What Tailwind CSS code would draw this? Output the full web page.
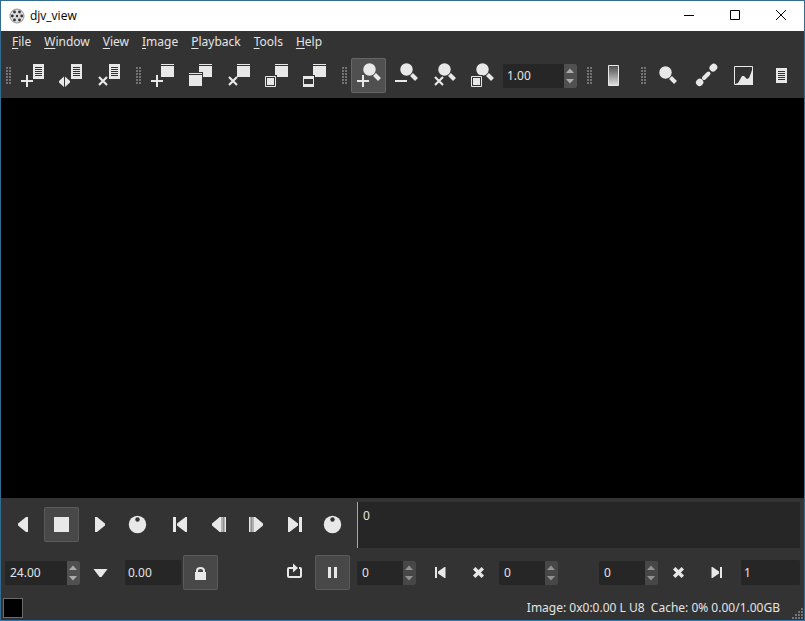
<!DOCTYPE html>
<html lang="en">
<head>
<meta charset="utf-8">
<meta name="viewport" content="width=device-width, initial-scale=1">
<title>djv_view</title>
<script src="https://cdn.jsdelivr.net/npm/@tailwindcss/browser@4"></script>
</head>
<body class="h-screen overflow-hidden bg-[#333333] font-['Noto_Sans',sans-serif] text-xs text-[#e4e4e4]">

<svg class="absolute size-0" aria-hidden="true">
  <defs>
    <linearGradient id="ramp" x1="0" y1="0" x2="0" y2="1"><stop offset="0" stop-color="#4c4c4c"/><stop offset="1" stop-color="#e0e0e0"/></linearGradient>
    <pattern id="dots" width="3" height="3" patternUnits="userSpaceOnUse"><rect width="2" height="2" fill="#737373"/></pattern>
    <symbol id="page" viewBox="0 0 11 15"><path fill="#e8e8e8" d="M0 0h11v15H0z"/><path stroke="#333" d="M2 3.500h7M2 5.500h7M2 7.500h7M2 9.500h7M2 11.500h7"/></symbol>
    <symbol id="win" viewBox="0 0 13 13"><path fill="#e8e8e8" d="M0 0h13v1H0zM0 2h13v11H0z"/></symbol>
    <symbol id="plus" viewBox="0 0 12 12"><path fill="#e8e8e8" d="M5 0h2v5h5v2H7v5H5V7H0V5h5z"/></symbol>
    <symbol id="cross" viewBox="0 0 10 10"><path stroke="#e8e8e8" stroke-width="2.2" d="M1 1l8 8M9 1l-8 8"/></symbol>
    <symbol id="box" viewBox="0 0 13 13"><path fill="#333" d="M0 0h13v13H0z"/><path fill="none" stroke="#e8e8e8" d="M1.500 1.500h10v10h-10z"/><path fill="#e8e8e8" d="M3 3h7v7H3z"/></symbol>
    <symbol id="lens" viewBox="0 0 20 20"><circle cx="6.500" cy="6.500" r="6.200" fill="#e8e8e8"/><path stroke="#e8e8e8" stroke-width="4" d="M11.500 11.500l5 5"/></symbol>
    <symbol id="shuttle" viewBox="0 0 35 35"><circle cx="17.500" cy="17.500" r="8.700" fill="#e8e8e8"/><circle cx="17.500" cy="12.500" r="2.200" fill="#333"/></symbol>
    <symbol id="skip" viewBox="0 0 35 35"><path fill="#e8e8e8" d="M10 10h3v15h-3zM24 10v15h-1.500L14 18.500v-2L22.500 10z"/></symbol>
    <symbol id="step" viewBox="0 0 35 35"><path fill="#e8e8e8" d="M20.700 10v15h-2L11 18.500v-2L18.700 10zM21.300 10h1.200v15h-1.200zM23.300 10h1.700v15h-1.700z"/></symbol>
    <symbol id="skipsm" viewBox="0 0 35 35"><path fill="#e8e8e8" d="M12 12h2v11h-2zM22.500 12v11h-1L15 18.500v-2L21.500 12z"/></symbol>
    <symbol id="clear" viewBox="0 0 35 35"><path stroke="#e8e8e8" stroke-width="3.400" d="M13.200 13.200l8.600 8.600M21.800 13.200l-8.600 8.600"/></symbol>
    <symbol id="up" viewBox="0 0 12 12"><path fill="#adadad" d="M2 9l4-4.500L10 9z"/></symbol>
    <symbol id="down" viewBox="0 0 12 12"><path fill="#adadad" d="M2 3l4 4.500L10 3z"/></symbol>
  </defs>
</svg>

<div class="flex h-full flex-col border border-[#346b90] border-b-[#2a7ab5]">
  <header class="flex h-[30px] shrink-0 items-center bg-white text-black">
    <svg class="ml-2 size-4" viewBox="0 0 16 16" aria-hidden="true">
      <circle cx="8" cy="8" r="7" fill="#ddd" stroke="#999"/>
      <g fill="#333"><circle cx="8" cy="8" r="1.200"/><circle cx="5.500" cy="4" r="1.400"/><circle cx="10.500" cy="4" r="1.400"/><circle cx="3.300" cy="8" r="1.400"/><circle cx="12.700" cy="8" r="1.400"/><circle cx="5.500" cy="12" r="1.400"/><circle cx="10.500" cy="12" r="1.400"/></g>
    </svg>
    <h1 class="ml-[5px] flex-1 font-['Open_Sans',sans-serif] text-xs">djv_view</h1>
    <button aria-label="Minimize" class="grid h-full w-[46px] place-items-center"><svg class="size-3" viewBox="0 0 12 12"><path stroke="#000" d="M1 5.500h10"/></svg></button>
    <button aria-label="Maximize" class="grid h-full w-[46px] place-items-center"><svg class="size-3" viewBox="0 0 12 12"><path fill="none" stroke="#000" d="M1.500 .5h9v9h-9z"/></svg></button>
    <button aria-label="Close" class="grid h-full w-[46px] place-items-center"><svg class="size-3" viewBox="0 0 12 12"><path stroke="#000" d="M1 0l10 10M11 0L1 10"/></svg></button>
  </header>

  <nav class="flex h-[22px] shrink-0 items-center gap-[13px] px-[11px]" aria-label="Main menu">
    <button><u class="underline-offset-2">F</u>ile</button>
    <button><u class="underline-offset-2">W</u>indow</button>
    <button><u class="underline-offset-2">V</u>iew</button>
    <button><u class="underline-offset-2">I</u>mage</button>
    <button><u class="underline-offset-2">P</u>layback</button>
    <button><u class="underline-offset-2">T</u>ools</button>
    <button><u class="underline-offset-2">H</u>elp</button>
  </nav>

  <div class="flex h-[45px] shrink-0 items-center gap-[10px] pl-[5px]" role="toolbar" aria-label="Tools">
    <div class="flex items-center gap-[3px]">
      <svg class="h-[18px] w-[6px]" viewBox="0 0 6 18"><path fill="url(#dots)" d="M0 0h6v18H0z"/></svg>
      <button aria-label="Open" class="size-[35px]"><svg viewBox="0 0 35 35"><use href="#page" x="18" y="6" width="11" height="15"/><use href="#plus" x="6" y="17" width="12" height="12"/></svg></button>
      <button aria-label="Reload" class="size-[35px]"><svg viewBox="0 0 35 35"><use href="#page" x="18" y="6" width="11" height="15"/><path fill="#e8e8e8" d="M11 18.500v10.500L6 24.500v-1.500zM12 18.500v10.500l5-4.500v-1.500z"/></svg></button>
      <button aria-label="Close file" class="size-[35px]"><svg viewBox="0 0 35 35"><use href="#page" x="18" y="6" width="11" height="15"/><use href="#cross" x="7" y="18" width="10" height="10"/></svg></button>
    </div>
    <div class="flex items-center gap-[3px]">
      <svg class="h-[18px] w-[6px]" viewBox="0 0 6 18"><path fill="url(#dots)" d="M0 0h6v18H0z"/></svg>
      <button aria-label="New window" class="size-[35px]"><svg viewBox="0 0 35 35"><use href="#win" x="16" y="6" width="13" height="13"/><use href="#plus" x="6" y="17" width="12" height="12"/></svg></button>
      <button aria-label="Copy window" class="size-[35px]"><svg viewBox="0 0 35 35"><use href="#win" x="16" y="6" width="13" height="13"/><path fill="#333" d="M5 14h15v16H5z"/><use href="#win" x="6" y="15" width="13" height="13"/></svg></button>
      <button aria-label="Close window" class="size-[35px]"><svg viewBox="0 0 35 35"><use href="#win" x="16" y="6" width="13" height="13"/><use href="#cross" x="7" y="18" width="10" height="10"/></svg></button>
      <button aria-label="Fit window" class="size-[35px]"><svg viewBox="0 0 35 35"><use href="#win" x="16" y="6" width="13" height="13"/><use href="#box" x="5" y="17" width="13" height="13"/></svg></button>
      <button aria-label="Full screen" class="size-[35px]"><svg viewBox="0 0 35 35"><use href="#win" x="16" y="6" width="13" height="13"/><path fill="#333" d="M5 17h13v13H5z"/><path fill="#e8e8e8" d="M6 18h11v11H6z"/><path fill="#333" d="M7 21h9v5H7z"/></svg></button>
    </div>
    <div class="flex items-center gap-[3px]">
      <svg class="h-[18px] w-[6px]" viewBox="0 0 6 18"><path fill="url(#dots)" d="M0 0h6v18H0z"/></svg>
      <button aria-label="Zoom in" class="size-[35px] rounded-xs bg-[#505050] outline -outline-offset-1 outline-[#666]"><svg viewBox="0 0 35 35"><use href="#lens" x="12" y="5" width="20" height="20"/><path fill="#505050" d="M10 16h4v2h5v6h-9z"/><use href="#plus" x="6" y="17" width="12" height="12"/></svg></button>
      <button aria-label="Zoom out" class="size-[35px]"><svg viewBox="0 0 35 35"><use href="#lens" x="11" y="5" width="20" height="20"/><path fill="#e8e8e8" d="M6 22h12v2H6z"/></svg></button>
      <button aria-label="Reset zoom" class="size-[35px]"><svg viewBox="0 0 35 35"><use href="#lens" x="11" y="5" width="20" height="20"/><use href="#cross" x="7" y="18" width="10" height="10"/></svg></button>
      <button aria-label="Fit view" class="size-[35px]"><svg viewBox="0 0 35 35"><use href="#lens" x="11" y="5" width="20" height="20"/><use href="#box" x="5" y="17" width="13" height="13"/></svg></button>
      <div class="flex h-6 w-[74px] rounded-xs bg-[#262626]">
        <input aria-label="Zoom" value="1.00" class="min-w-0 flex-1 bg-transparent pl-1 outline-none">
        <span class="flex w-[13px] flex-col rounded-r-xs bg-[#505050]"><button aria-label="Increase zoom" class="h-3"><svg class="size-3"><use href="#up"/></svg></button><button aria-label="Decrease zoom" class="h-3"><svg class="size-3"><use href="#down"/></svg></button></span>
      </div>
    </div>
    <div class="flex items-center gap-[3px]">
      <svg class="h-[18px] w-[6px]" viewBox="0 0 6 18"><path fill="url(#dots)" d="M0 0h6v18H0z"/></svg>
      <button aria-label="Display profile" class="size-[35px]"><svg viewBox="0 0 35 35"><path fill="url(#ramp)" stroke="#e8e8e8" d="M12.500 7.500h10v20h-10z"/></svg></button>
    </div>
    <div class="flex items-center gap-[3px]">
      <svg class="h-[18px] w-[6px]" viewBox="0 0 6 18"><path fill="url(#dots)" d="M0 0h6v18H0z"/></svg>
      <button aria-label="Magnify" class="size-[35px]"><svg viewBox="0 0 35 35"><use href="#lens" x="9" y="8" width="20" height="20"/></svg></button>
      <button aria-label="Color picker" class="size-[35px]"><svg viewBox="0 0 35 35"><g stroke="#e8e8e8" stroke-linecap="round"><path stroke-width="4" d="M16 20l4.500-4.500"/><path stroke-width="7" d="M25 10l.8-.8M11.500 24.500l.3-.3"/></g></svg></button>
      <button aria-label="Histogram" class="size-[35px]"><svg viewBox="0 0 35 35"><path fill="none" stroke="#e8e8e8" d="M8.500 8.500h18v18h-18z"/><path fill="#e8e8e8" d="M9 27v-1l3-1 4-7h2l3 3 2-1 2-5 2-6v18z"/></svg></button>
      <button aria-label="Information" class="size-[35px]"><svg viewBox="0 0 35 35"><use href="#page" x="12" y="10" width="11" height="15"/></svg></button>
    </div>
  </div>

  <main class="min-h-0 flex-1 bg-black" aria-label="Image view"></main>

  <section class="flex shrink-0 flex-col gap-[7px] pt-1 pr-1 pl-1" aria-label="Playback">
    <div class="flex h-[46px] items-center gap-[7px]">
      <div class="flex gap-[3px] pb-px pl-px">
        <button aria-label="Play reverse" class="size-[35px]"><svg viewBox="0 0 35 35"><path fill="#e8e8e8" d="M22 10v15h-2l-8-6.500v-2L20 10z"/></svg></button>
        <button aria-label="Stop" class="size-[35px] rounded-xs bg-[#484848] outline -outline-offset-1 outline-[#5a5a5a]"><svg viewBox="0 0 35 35"><path fill="#e8e8e8" d="M10 10h15v15H10z"/></svg></button>
        <button aria-label="Play forward" class="size-[35px]"><svg viewBox="0 0 35 35"><path fill="#e8e8e8" d="M13 10v15h2l8-6.500v-2L15 10z"/></svg></button>
        <button aria-label="Shuttle playback" class="size-[35px]"><svg class="size-full"><use href="#shuttle"/></svg></button>
      </div>
      <div class="flex gap-[3px] pb-px pl-px">
        <button aria-label="First frame" class="size-[35px]"><svg class="size-full"><use href="#skip"/></svg></button>
        <button aria-label="Previous frame" class="size-[35px]"><svg class="size-full"><use href="#step"/></svg></button>
        <button aria-label="Next frame" class="size-[35px]"><svg class="size-full -scale-x-100"><use href="#step"/></svg></button>
        <button aria-label="Last frame" class="size-[35px]"><svg class="size-full -scale-x-100"><use href="#skip"/></svg></button>
        <button aria-label="Shuttle frame" class="size-[35px]"><svg class="size-full"><use href="#shuttle"/></svg></button>
      </div>
      <div class="h-full flex-1 border-l border-[#a8a8a8] bg-[#262626] pl-[5px] leading-7" role="slider" aria-label="Timeline" aria-valuenow="0">0</div>
    </div>
    <div class="flex h-[35px] items-center">
      <div class="flex h-6 w-[75px] rounded-xs bg-[#262626]">
        <input aria-label="Speed" value="24.00" class="min-w-0 flex-1 bg-transparent pl-[5px] outline-none">
        <span class="flex w-[13px] flex-col rounded-r-xs bg-[#505050]"><button aria-label="Increase speed" class="h-3"><svg class="size-3"><use href="#up"/></svg></button><button aria-label="Decrease speed" class="h-3"><svg class="size-3"><use href="#down"/></svg></button></span>
      </div>
      <button aria-label="Speed presets" class="ml-[3px] size-[35px]"><svg viewBox="0 0 35 35"><path fill="#e8e8e8" d="M10.500 14h14l-6 8h-2z"/></svg></button>
      <input aria-label="Actual speed" value="0.00" readonly class="ml-[7px] h-[25px] w-14 rounded-xs bg-[#262626] pl-[3px] outline-none">
      <button aria-label="Every frame" class="ml-[2px] size-[35px] rounded-xs bg-[#484848] outline -outline-offset-1 outline-[#5a5a5a]"><svg viewBox="0 0 35 35"><path fill="#e8e8e8" d="M12 17h11v8H12z"/><path fill="none" stroke="#e8e8e8" stroke-width="2" d="M14 18v-2.500q0-2.500 3.500-2.500t3.500 2.500V18"/></svg></button>
      <button aria-label="Loop" class="ml-[59px] size-[35px]"><svg viewBox="0 0 35 35"><path fill="none" stroke="#e8e8e8" stroke-width="2" d="M14 13h-2q-1 0-1 1v7q0 1 1 1h11q1 0 1-1v-7q0-1-1-1h-1M14 13h3"/><path fill="#e8e8e8" d="M16 8.500l5 4.500-5 4.500z"/></svg></button>
      <button aria-label="In/out points" class="ml-[3px] size-[35px] rounded-xs bg-[#484848] outline -outline-offset-1 outline-[#5a5a5a]"><svg viewBox="0 0 35 35"><path fill="#e8e8e8" d="M13 12h3v11h-3zM19 12h3v11h-3z"/></svg></button>
      <div class="ml-[7px] flex flex-1 items-center gap-[3px]">
        <div class="mr-1 flex h-6 w-[59px] rounded-xs bg-[#262626]">
          <input aria-label="Frame" value="0" class="min-w-0 flex-1 bg-transparent pl-[5px] outline-none">
          <span class="flex w-[13px] flex-col rounded-r-xs bg-[#505050] opacity-80"><button aria-label="Increase frame" class="h-3"><svg class="size-3"><use href="#up"/></svg></button><button aria-label="Decrease frame" class="h-3"><svg class="size-3"><use href="#down"/></svg></button></span>
        </div>
        <button aria-label="Set in point" class="size-[35px]"><svg class="size-full"><use href="#skipsm"/></svg></button>
        <button aria-label="Clear in point" class="size-[35px]"><svg class="size-full"><use href="#clear"/></svg></button>
        <div class="flex h-6 w-[59px] rounded-xs bg-[#262626]">
          <input aria-label="In point" value="0" class="min-w-0 flex-1 bg-transparent pl-[5px] outline-none">
          <span class="flex w-[13px] flex-col rounded-r-xs bg-[#505050] opacity-80"><button aria-label="Increase in point" class="h-3"><svg class="size-3"><use href="#up"/></svg></button><button aria-label="Decrease in point" class="h-3"><svg class="size-3"><use href="#down"/></svg></button></span>
        </div>
        <div class="ml-auto flex h-6 w-[59px] rounded-xs bg-[#262626]">
          <input aria-label="Out point" value="0" class="min-w-0 flex-1 bg-transparent pl-[5px] outline-none">
          <span class="flex w-[13px] flex-col rounded-r-xs bg-[#505050] opacity-80"><button aria-label="Increase out point" class="h-3"><svg class="size-3"><use href="#up"/></svg></button><button aria-label="Decrease out point" class="h-3"><svg class="size-3"><use href="#down"/></svg></button></span>
        </div>
        <button aria-label="Clear out point" class="size-[35px]"><svg class="size-full"><use href="#clear"/></svg></button>
        <button aria-label="Set out point" class="size-[35px]"><svg class="size-full -scale-x-100"><use href="#skipsm"/></svg></button>
        <input aria-label="Duration" value="1" readonly class="ml-1 h-[25px] w-[59px] rounded-xs bg-[#262626] pl-[3px] outline-none">
      </div>
    </div>
  </section>

  <footer class="flex h-[30px] shrink-0 items-center pl-[2px]">
    <span class="mt-[5px] size-5 border border-[#6a6a6a] bg-black"></span>
    <p class="mt-[6px] ml-auto whitespace-pre">Image: 0x0:0.00 L U8  Cache: 0% 0.00/1.00GB</p>
    <svg class="ml-3 size-3 self-end" viewBox="0 0 12 12" aria-hidden="true"><path fill="url(#dots)" d="M9 0h3v12H0V9h3V6h3V3h3z"/></svg>
  </footer>
</div>
</body>
</html>
